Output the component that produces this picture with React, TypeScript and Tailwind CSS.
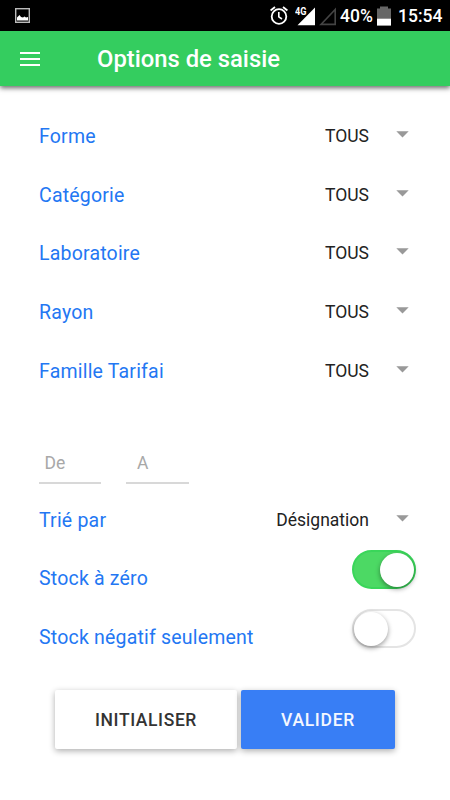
import React from 'react';

const labelClass = 'pt-[3px] text-[19.5px] leading-[24px] tracking-[0.2px] text-[#2377f3]';

function Caret() {
  return (
    <svg className="ml-[27px] block h-[7px] w-[13px] -translate-y-px" viewBox="0 0 13 7">
      <path d="M0.3 0.3H12.7L6.5 6.6Z" fill="#999" />
    </svg>
  );
}

function SelectRow({ label, value }: { label: string; value: string }) {
  return (
    <div className="flex h-[58.7px] items-center pr-[41px] pl-[39px]">
      <span className={labelClass}>{label}</span>
      <span className="ml-auto pt-px text-[17.5px] leading-[24px] text-[#222]">{value}</span>
      <Caret />
    </div>
  );
}

function Toggle({ on }: { on: boolean }) {
  return (
    <span
      className={`flex h-[39px] w-[64px] items-center rounded-full border-2 ${
        on ? 'justify-end border-[#3ad65a] bg-[#4cd964]' : 'justify-start border-[#e4e4e4] bg-white'
      }`}
    >
      <span className="h-[34px] w-[34px] rounded-full bg-white shadow-[0_2px_5px_rgba(0,0,0,0.4)]" />
    </span>
  );
}

function ToggleRow({ label, on }: { label: string; on: boolean }) {
  return (
    <div className="flex h-[58.7px] items-center justify-between pr-[34px] pl-[39px]">
      <span className={labelClass}>{label}</span>
      <span className="-mt-[16px]">
        <Toggle on={on} />
      </span>
    </div>
  );
}

function StatusBar() {
  return (
    <div className="flex h-[31px] items-center bg-black text-white">
      <svg className="ml-[15px] h-[15px] w-[15px]" viewBox="0 0 15 15">
        <rect x="0.7" y="0.7" width="13.6" height="13.6" fill="none" stroke="#bbb" strokeWidth="1.4" />
        <path d="M2 12.5V9.5L3 8.5L4.5 7L6 9L8 9.5L9.5 8.5L11 9.5L13 9V12.5Z" fill="#fff" />
      </svg>
      <svg className="ml-auto h-[19px] w-[18px]" viewBox="0 0 18 19" fill="none" stroke="#fff">
        <circle cx="9" cy="10.5" r="7.3" strokeWidth="1.8" />
        <path d="M0.6 4.5L5 1M17.4 4.5L13 1" strokeWidth="1.8" />
        <path d="M8.8 6V10.8L12 13" strokeWidth="1.6" />
      </svg>
      <svg className="ml-[7px] h-[20px] w-[21px]" viewBox="0 0 21 20">
        <path d="M2.5 19.2H20V1.5Z" fill="#fff" />
        <text x="0" y="9.3" fontFamily="Roboto, sans-serif" fontWeight="700" fontSize="10" textLength="11.5" lengthAdjust="spacingAndGlyphs" fill="#fff" stroke="#000" strokeWidth="1.6" paintOrder="stroke">4G</text>
      </svg>
      <svg className="ml-[3px] h-[20px] w-[18px]" viewBox="0 0 18 20">
        <path d="M2 18.4H16.2V3.5Z" fill="none" stroke="#444" strokeWidth="1.6" />
      </svg>
      <span className="ml-[3px] w-[33px] pt-px text-[17.5px] leading-[20px] font-medium whitespace-nowrap">40%</span>
      <svg className="ml-[4px] h-[20px] w-[14px]" viewBox="0 0 14 20">
        <path d="M0 2.5H3V0.5H11V2.5H14V19.5H0Z" fill="#666" />
        <path d="M0 12.7H14V19.5H0Z" fill="#fff" />
      </svg>
      <span className="mr-[7px] ml-[7px] w-[45px] pt-px text-[17.5px] leading-[20px] font-medium whitespace-nowrap">15:54</span>
    </div>
  );
}

export default function App() {
  return (
    <div className="flex h-[800px] w-[450px] flex-col overflow-hidden bg-white font-['Roboto',sans-serif]">
      <StatusBar />
      <header className="z-10 flex h-[55px] shrink-0 items-center bg-[#34cd5f] text-white shadow-[0_2px_5px_rgba(0,0,0,0.6)]">
        <svg className="ml-[20px] h-[14px] w-[20px]" viewBox="0 0 20 14">
          <path d="M0 1H20M0 7H20M0 13H20" stroke="#fff" strokeWidth="2" />
        </svg>
        <h1 className="ml-[57px] text-[23.8px] leading-[28px] font-medium">Options de saisie</h1>
      </header>
      <main className="flex flex-col pt-[20px]">
        <SelectRow label="Forme" value="TOUS" />
        <SelectRow label="Catégorie" value="TOUS" />
        <SelectRow label="Laboratoire" value="TOUS" />
        <SelectRow label="Rayon" value="TOUS" />
        <SelectRow label="Famille Tarifai" value="TOUS" />
        <div className="mt-[44px] flex h-[40.5px] gap-[25px] pl-[39px] text-[17.5px] text-[#a8a8a8]">
          <div className="w-[62px] border-b-2 border-[#d8d8d8] pt-[8px] pl-[5.5px] leading-[24px]">De</div>
          <div className="w-[63px] border-b-2 border-[#d8d8d8] pt-[8px] pl-[11px] leading-[24px]">A</div>
        </div>
        <div className="mt-[6px]">
          <SelectRow label="Trié par" value="Désignation" />
          <ToggleRow label="Stock à zéro" on />
          <ToggleRow label="Stock négatif seulement" on={false} />
        </div>
        <div className="mt-[24px] flex gap-[4px] pl-[55px]">
          <button className="h-[59px] w-[182px] rounded-[2px] bg-white pt-[2px] text-[17.5px] font-medium tracking-[0.6px] text-[#333] shadow-[0_2px_6px_rgba(0,0,0,0.32)]">
            INITIALISER
          </button>
          <button className="h-[59px] w-[154px] rounded-[2px] bg-[#387ef5] pt-[2px] text-[17.5px] font-medium tracking-[0.7px] text-[#f4f7ff] shadow-[0_2px_6px_rgba(0,0,0,0.32)]">
            VALIDER
          </button>
        </div>
      </main>
    </div>
  );
}
